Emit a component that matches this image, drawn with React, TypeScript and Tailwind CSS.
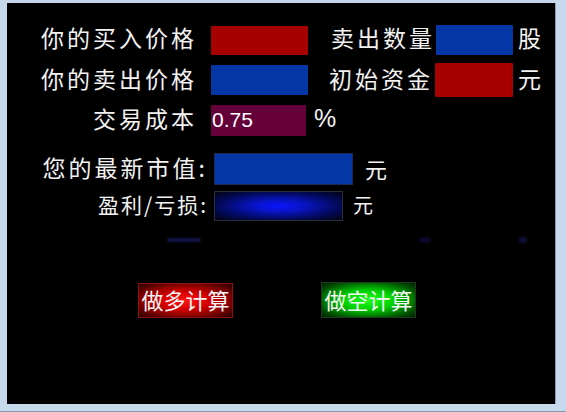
import React from "react";

const cjk = { fontFamily: '"Noto Sans CJK SC", "Noto Sans", sans-serif' };
const lat = { fontFamily: '"Liberation Sans", Arial, sans-serif' };

export default function App() {
  return (
    <div className="w-[566px] h-[412px] bg-[#c6d8ec] flex flex-col overflow-hidden">
      <div className="flex flex-1 pt-[3px] pl-[7px] pr-[10px]">
        <div
          className="flex-1 bg-black text-[#f2f2f2] flex flex-col pt-[17px] border-r border-[#8a9db3]"
          style={cjk}
        >
          {/* Row 1 */}
          <div className="flex items-center h-[40px]">
            <div className="w-[190px] text-right text-[23px] tracking-[3px] leading-none pb-[5px]">你的买入价格</div>
            <div className="ml-[14px] w-[97px] h-[29px] bg-[#a60000]" />
            <div className="ml-[23px] text-[23px] tracking-[3px] leading-none pb-[5px]">卖出数量</div>
            <div className="ml-[1px] w-[77px] h-[30px] bg-[#0536a6] rounded-[1px]" />
            <div className="ml-[5px] text-[23px] leading-none pb-[5px]">股</div>
          </div>
          {/* Row 2 */}
          <div className="flex items-center h-[40px]">
            <div className="w-[190px] text-right text-[23px] tracking-[3px] leading-none pb-[4px]">你的卖出价格</div>
            <div className="ml-[14px] w-[97px] h-[30px] bg-[#0536a6]" />
            <div className="ml-[21px] text-[23px] tracking-[3px] leading-none pb-[4px]">初始资金</div>
            <div className="ml-[2px] w-[78px] h-[34px] bg-[#a60000] rounded-[1px]" />
            <div className="ml-[5px] text-[23px] leading-none pb-[4px]">元</div>
          </div>
          {/* Row 3 */}
          <div className="flex items-center h-[40px]">
            <div className="w-[190px] text-right text-[23px] tracking-[3px] leading-none pb-[4px]">交易成本</div>
            <div
              className="ml-[14px] w-[95px] h-[31px] bg-[#65003a] flex items-center pl-[1px] text-[21px] text-white"
              style={lat}
            >
              0.75
            </div>
            <div className="ml-[8px] text-[25px] leading-none pb-[4px]" style={lat}>
              %
            </div>
          </div>
          {/* Row 4 */}
          <div className="flex items-center h-[34px] mt-[12px]">
            <div className="w-[201px] text-right text-[23px] tracking-[3px] leading-none pb-[3px]">您的最新市值:</div>
            <div className="ml-[6px] w-[139px] h-[32px] bg-[#0536a6] border border-[#1a2a55]" />
            <div className="ml-[12px] text-[22px] leading-none pb-[3px]">元</div>
          </div>
          {/* Row 5 */}
          <div className="flex items-center h-[32px] mt-[4px]">
            <div className="w-[201px] text-right text-[21px] tracking-[2px] leading-none pb-[3px]">盈利/亏损:</div>
            <div className="ml-[6px] w-[129px] h-[30px] border border-[#2a2d3a] bg-[radial-gradient(ellipse_at_center,#0a14ff_0%,#0814c0_30%,#030a60_65%,#01030f_100%)]" />
            <div className="ml-[10px] text-[20px] leading-none pb-[3px]">元</div>
          </div>
          {/* faint artifacts */}
          <div className="flex items-center h-[8px] mt-[14px]">
            <div className="ml-[160px] w-[34px] h-[4px] rounded-full bg-[#14144a] blur-[1px]" />
            <div className="ml-[218px] w-[12px] h-[4px] rounded-full bg-[#0c0c36] blur-[1px]" />
            <div className="ml-[88px] w-[8px] h-[6px] rounded-full bg-[#10103e] blur-[1px]" />
          </div>
          {/* Buttons */}
          <div className="flex items-center mt-[38px]">
            <div className="ml-[131px] w-[95px] h-[35px] border border-[#8a1212] bg-[radial-gradient(ellipse_at_center,#ff1414_0%,#d00000_40%,#600000_80%,#240000_100%)] flex items-center justify-center text-[22px] leading-none text-[#f4f4f4] pb-[2px]">
              做多计算
            </div>
            <div className="ml-[88px] w-[95px] h-[36px] border border-[#1f3a1f] bg-[radial-gradient(ellipse_at_center,#20ff20_0%,#00d000_40%,#005000_80%,#002000_100%)] flex items-center justify-center text-[22px] leading-none text-[#f4f4f4] pb-[2px]">
              做空计算
            </div>
          </div>
        </div>
      </div>
      <div className="h-[8px] border-b border-[#7f98b2]" />
    </div>
  );
}
